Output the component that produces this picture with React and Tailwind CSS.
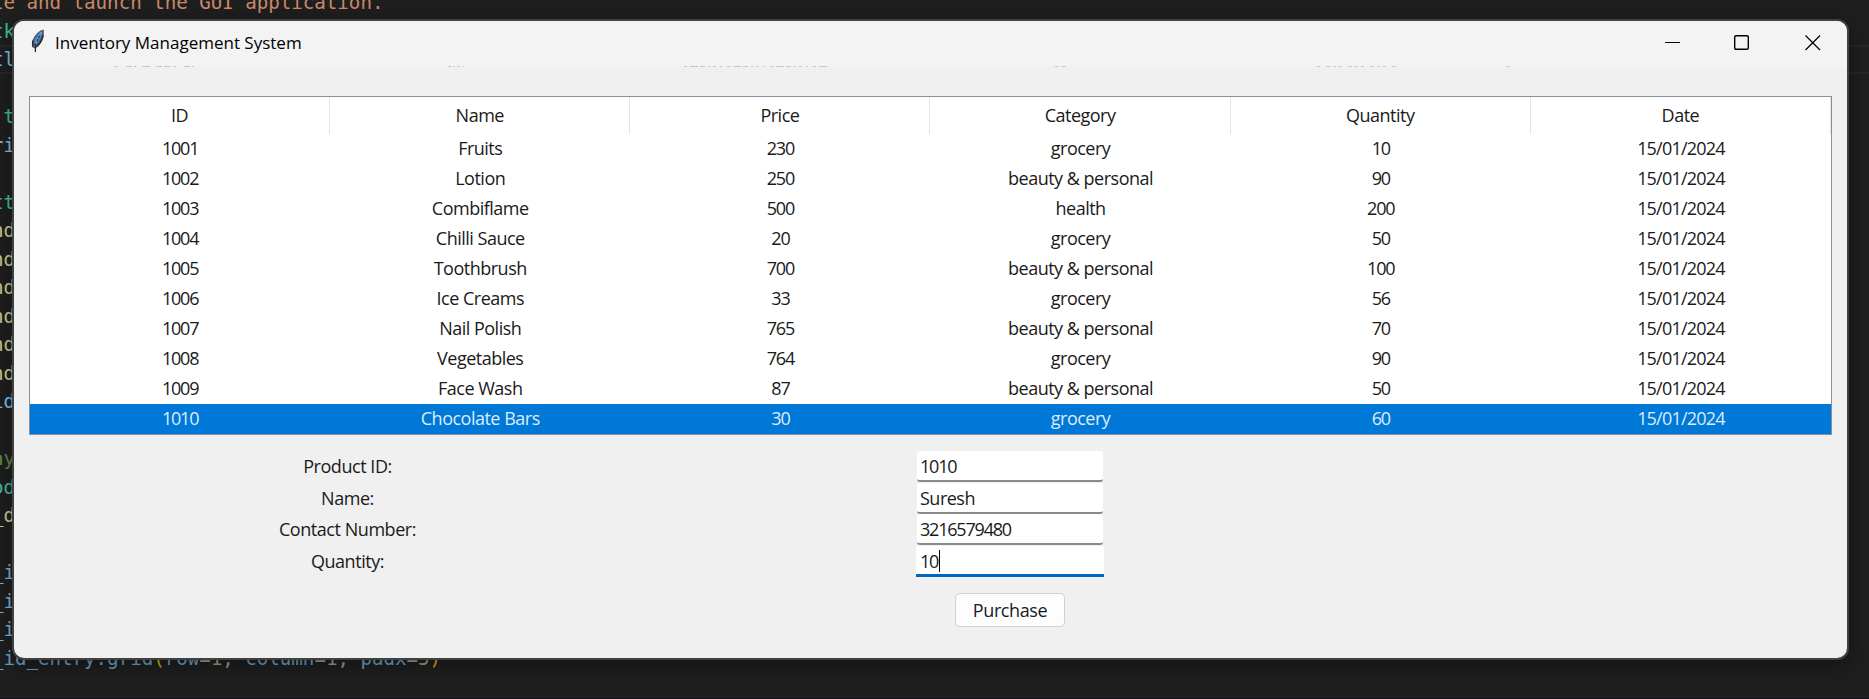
import React from "react";

const CODE = [
  [["te and launch the GUI application.", "text-[#ce8b6b]"]],
  [["tk", "text-[#43bfa0]"]],
  [["tl", "text-[#82c4ee]"]],
  [],
  [[" t", "text-[#43bfa0]"]],
  [["ri", "text-[#82c4ee]"]],
  [],
  [["tt", "text-[#43bfa0]"]],
  [["nd", "text-[#cfcf95]"]],
  [["nd", "text-[#cfcf95]"]],
  [["nd", "text-[#cfcf95]"]],
  [["nd", "text-[#cfcf95]"]],
  [["nd", "text-[#cfcf95]"]],
  [["nd", "text-[#cfcf95]"]],
  [["id", "text-[#82c4ee]"]],
  [],
  [["ay", "text-[#5f8c48]"]],
  [["od", "text-[#43bfa0]"]],
  [["_d", "text-[#cfcf95]"]],
  [],
  [["_i", "text-[#7db8de]"]],
  [["_i", "text-[#7db8de]"]],
  [["_i", "text-[#7db8de]"]],
  [
    ["_id_entry.grid", "text-[#6ea3c6]"],
    ["(", "text-[#e0b800]"],
    ["row", "text-[#6ea3c6]"],
    ["=", "text-[#a0a0a0]"],
    ["1", "text-[#8fa583]"],
    [", ", "text-[#a0a0a0]"],
    ["column", "text-[#6ea3c6]"],
    ["=", "text-[#a0a0a0]"],
    ["1", "text-[#8fa583]"],
    [", ", "text-[#a0a0a0]"],
    ["padx", "text-[#6ea3c6]"],
    ["=", "text-[#a0a0a0]"],
    ["5", "text-[#8fa583]"],
    [")", "text-[#e0b800]"],
  ],
];

const COLUMNS = ["ID", "Name", "Price", "Category", "Quantity", "Date"];
const ROWS = [
  ["1001", "Fruits", "230", "grocery", "10"],
  ["1002", "Lotion", "250", "beauty & personal", "90"],
  ["1003", "Combiflame", "500", "health", "200"],
  ["1004", "Chilli Sauce", "20", "grocery", "50"],
  ["1005", "Toothbrush", "700", "beauty & personal", "100"],
  ["1006", "Ice Creams", "33", "grocery", "56"],
  ["1007", "Nail Polish", "765", "beauty & personal", "70"],
  ["1008", "Vegetables", "764", "grocery", "90"],
  ["1009", "Face Wash", "87", "beauty & personal", "50"],
  ["1010", "Chocolate Bars", "30", "grocery", "60"],
];

const FIELDS = [
  ["Product ID:", "1010"],
  ["Name:", "Suresh"],
  ["Contact Number:", "3216579480"],
  ["Quantity:", "10"],
];

// Numbers are set tighter than words, dates slightly looser than numbers.
const tracking = (text) => {
  if (/^\d+$/.test(text)) return "tracking-[-1.2px]";
  if (/^[\d/]+$/.test(text)) return "tracking-[-0.8px]";
  return "tracking-[-0.5px]";
};

function Editor() {
  return (
    <div className="h-[699px] overflow-hidden border-b border-[#17131a] bg-[#1f1f1f]">
      <div className="-mt-[11px] -ml-[8px] font-['DejaVu_Sans_Mono',monospace] text-[19.2px] tracking-[-0.04px]">
        {CODE.map((line, i) => (
          <div
            key={i}
            className={
              i === 2
                ? "-mt-px mb-px h-[28.5px] border-y-2 border-[#282828] leading-[26.5px] whitespace-pre"
                : "h-[28.5px] leading-[28.5px] whitespace-pre"
            }
          >
            {line.map(([text, color], j) => (
              <span key={j} className={color}>{text}</span>
            ))}
          </div>
        ))}
      </div>
    </div>
  );
}

function Feather() {
  return (
    <svg width="14" height="24" viewBox="0 0 14 24">
      <path d="M12.6.6C8 1.400 3.600 6 1.400 11.500c-.7 2.300-.8 4.500.2 7l2.500 1 1-.5c3.500-2.500 6-6 7.200-10.500.7-3 .9-6 .3-7.900z" fill="#59636f" />
      <path d="M11.300 2C7 4.500 3.200 9.500 3.100 16.500c3.500-2.500 6-6 7.200-9.500.7-2 1-3.500 1-5z" fill="#3f86d8" />
      <path d="M10.500 3.200C7.800 6.500 5.500 11 4.800 15" fill="none" stroke="#84b4ea" strokeWidth="1" />
      <path d="M4.400 14.500V23M1.700 11.500v6M12.200 6c-1 5-3.200 8.500-6.200 11.500" fill="none" stroke="#22272e" strokeWidth="1.300" />
      <path d="M8.500 6.500l-1 2.500M7 10l-1 2.500" fill="none" stroke="#1d3350" strokeWidth="1.200" />
    </svg>
  );
}

function TitleBar() {
  return (
    <div className="flex h-[45px] items-start bg-[#f3f3f3] pl-[17px]">
      <div className="pt-[8px]"><Feather /></div>
      <div className="ml-[10px] pt-[9px] font-['Open_Sans',sans-serif] text-[17px] leading-[26px] text-black">
        Inventory Management System
      </div>
      <div className="mr-[26px] ml-auto flex pt-[14px]">
        <svg width="16" height="16"><path d="M0 7.500h15" stroke="#000" /></svg>
        <svg className="ml-[53px]" width="16" height="16"><rect x=".7" y=".7" width="13.600" height="13.600" rx="1.300" fill="none" stroke="#000" strokeWidth="1.400" /></svg>
        <svg className="ml-[55px]" width="16" height="16"><path d="M.5.5l14.500 14.500M15 .5L.5 15" stroke="#000" strokeWidth="1.200" /></svg>
      </div>
    </div>
  );
}

// Faint slivers of scrolled-away text under the title bar.
function ScrollResidue() {
  return (
    <svg className="block" width="1833" height="1">
      <g stroke="#c9c9cb" strokeWidth="1">
        <path d="M101 .5h84" strokeDasharray="3 8 6 2 2 6 8 6 6 2 6 3" />
        <path d="M434 .5h15" strokeDasharray="3 2 2 2" />
        <path d="M670 .5h145" strokeDasharray="3 3 8 2 5 3 2 3 3 4 2 5" />
        <path d="M1041 .5h12" strokeDasharray="4 3" />
        <path d="M1303 .5h82" strokeDasharray="3 6 4 3 3 3" />
        <path d="M1492 .5h3" />
      </g>
    </svg>
  );
}

function Table() {
  return (
    <div className="mx-[15px] mt-[29px] h-[339px] border border-[#8a8f9b] bg-white text-center">
      <div className="grid h-[37px] grid-cols-6 leading-[37px]">
        {COLUMNS.map((c) => (
          <div key={c} className="border-r border-[#e5e5e5] tracking-[-0.5px]">{c}</div>
        ))}
      </div>
      {ROWS.map((row, i) => (
        <div
          key={row[0]}
          className={
            i === 9
              ? "grid h-[30px] grid-cols-6 bg-[#0078d7] leading-[28px] text-[#dcecfa]"
              : "grid h-[30px] grid-cols-6 leading-[28px]"
          }
        >
          {[...row, "15/01/2024"].map((cell, j) => (
            <div key={j} className={tracking(cell)}>{cell}</div>
          ))}
        </div>
      ))}
    </div>
  );
}

export default function App() {
  return (
    <div className="relative h-[699px] w-[1869px] overflow-hidden">
      <Editor />
      <div className="absolute top-[19px] left-[12px] h-[641px] w-[1837px] overflow-hidden rounded-[12px] border-2 border-[#414141] bg-[#f0f0f0] font-['Open_Sans',sans-serif] text-[18px] text-[#1a1a1a] shadow-[0_6px_24px_rgba(0,0,0,0.4)]">
        <TitleBar />
        <ScrollResidue />
        <Table />
        <form className="mt-[16px]">
          {FIELDS.map(([label, value], i) => (
            <div key={label} className="flex h-[31.500px] leading-[30px]">
              <div className="w-[667px] text-center tracking-[-0.45px]">{label}</div>
              <div className={i === 3
                ? "ml-[235px] flex h-[31px] w-[188px] items-center border-b-[3px] border-[#0067c0] bg-white pt-[2px] pl-[4px]"
                : "ml-[236px] h-[31px] w-[186px] rounded-[3px] border-b-2 border-[#8a8a8a] bg-white pl-[3px] leading-[30px]"}>
                <span className={tracking(value)}>{value}</span>
                {i === 3 && <span className="ml-[1px] h-[22px] w-[1px] bg-black" />}
              </div>
            </div>
          ))}
          <button type="button" className="mt-[16px] ml-[941px] h-[34px] w-[110px] rounded-[5px] border border-[#d0d0d0] bg-[#fdfdfd] tracking-[-0.4px]">
            Purchase
          </button>
        </form>
      </div>
    </div>
  );
}
